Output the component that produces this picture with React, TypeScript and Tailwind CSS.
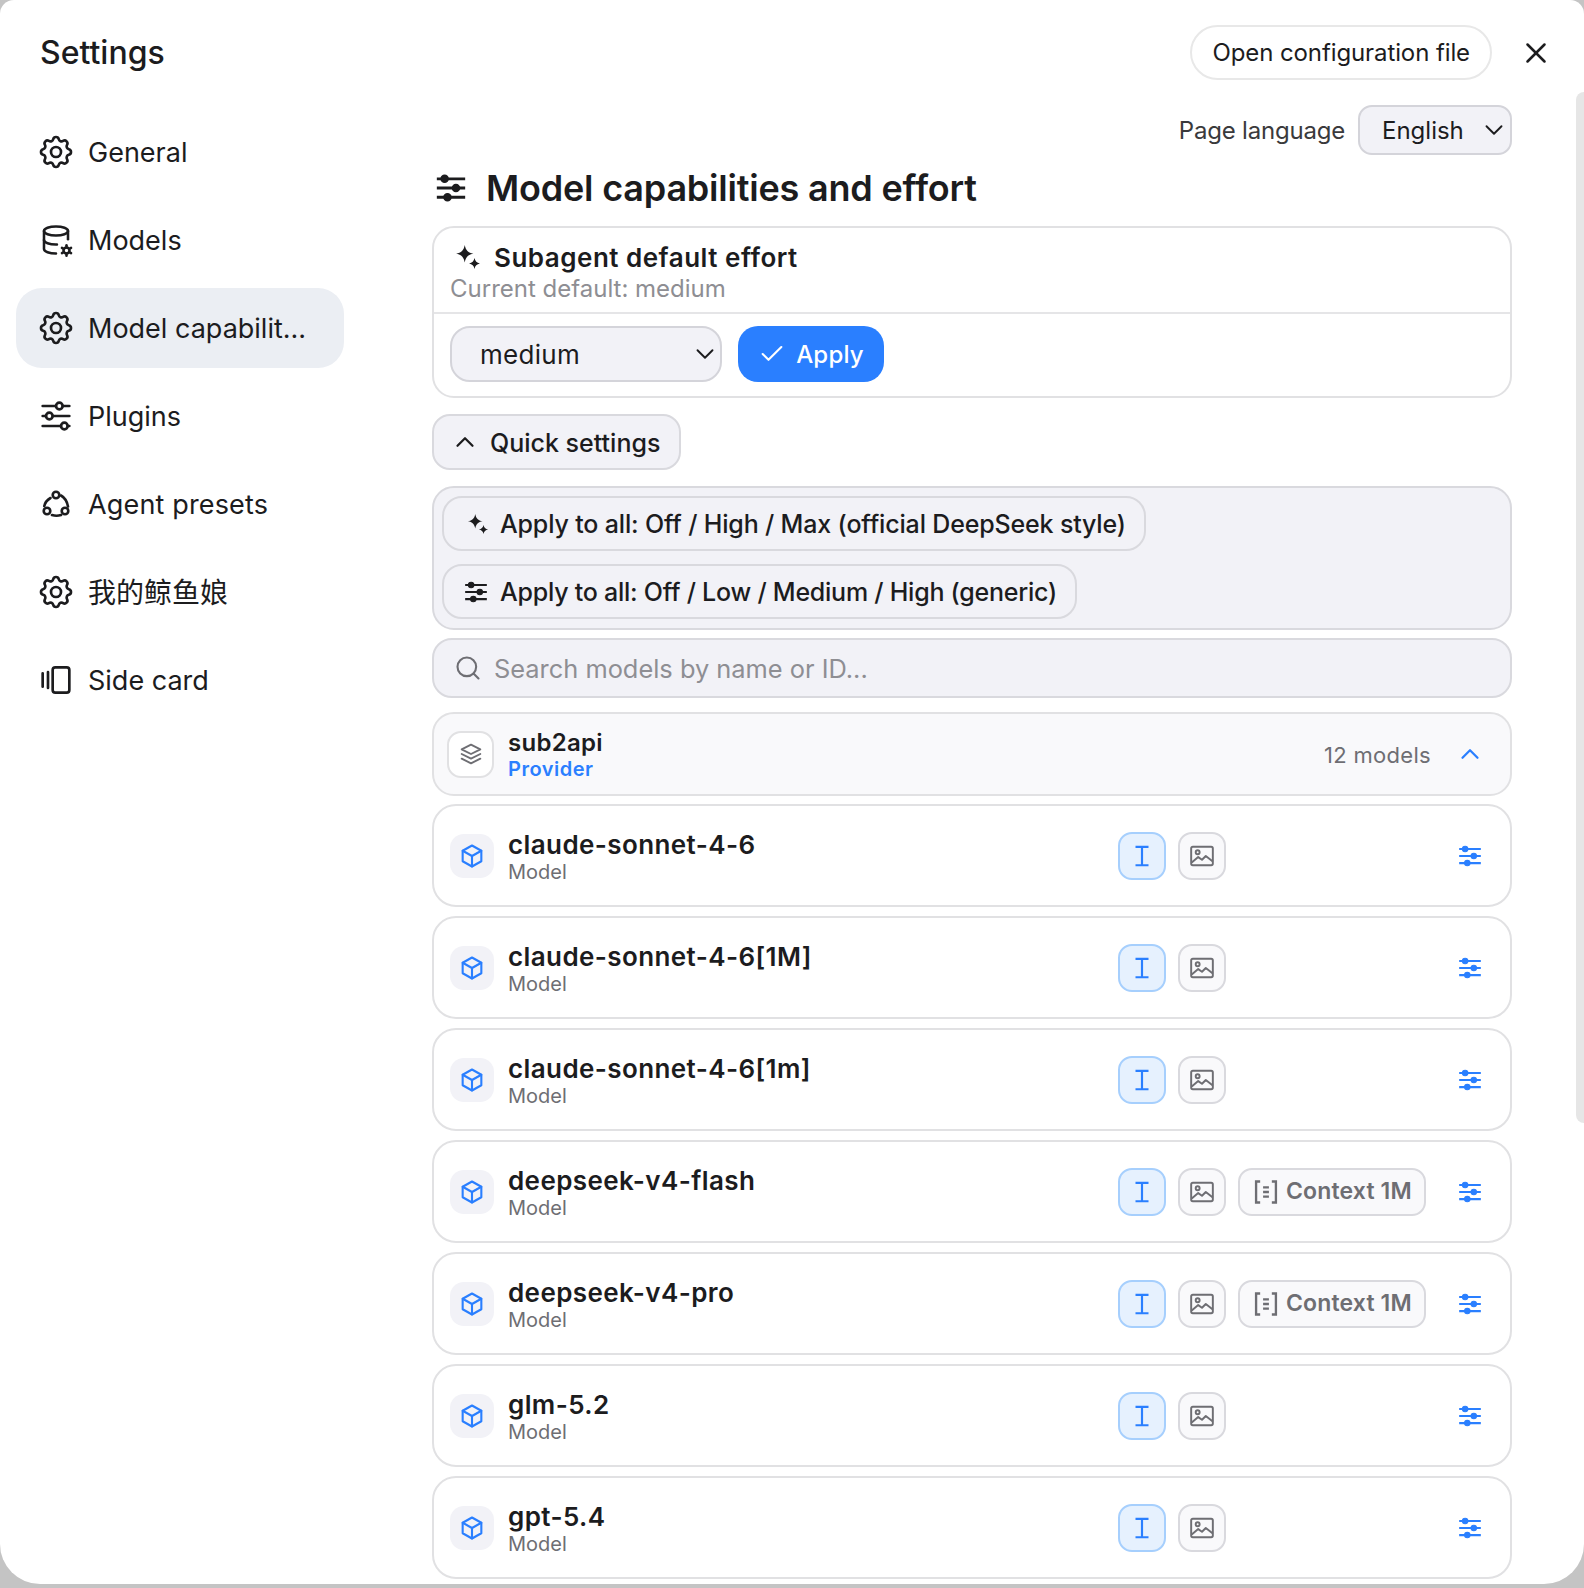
import { LuCheck, LuChevronDown, LuChevronUp, LuSearch, LuX } from 'react-icons/lu';
import { TbAdjustmentsHorizontal, TbBox, TbDatabaseCog, TbSettings, TbStack2 } from 'react-icons/tb';
import type { ReactNode } from 'react';

const font = { fontFamily: 'Inter, "Noto Sans CJK SC", sans-serif' };

function Sparkle({ className }: { className: string }) {
  return (
    <svg viewBox="0 0 24 24" className={className} fill="currentColor">
      <path d="M9 1c.8 4.800 3.200 7.200 8 8-4.800.8-7.200 3.200-8 8-.8-4.800-3.200-7.200-8-8 4.800-.8 7.200-3.200 8-8z" />
      <path d="M18 13c.5 2.800 2.200 4.500 5 5-2.800.5-4.500 2.200-5 5-.5-2.800-2.200-4.500-5-5 2.800-.5 4.500-2.200 5-5z" />
    </svg>
  );
}

function Tune({ className }: { className: string }) {
  return (
    <svg viewBox="0 0 24 24" className={className} fill="currentColor" stroke="currentColor">
      <path d="M2 5.500h20M2 12h20M2 18.500h20" strokeWidth="2" fill="none" />
      <circle cx="7.500" cy="5.500" r="2.500" strokeWidth="1" />
      <circle cx="15.500" cy="12" r="2.500" strokeWidth="1" />
      <circle cx="9.500" cy="18.500" r="2.500" strokeWidth="1" />
    </svg>
  );
}

function SideCardIcon({ className }: { className: string }) {
  return (
    <svg viewBox="0 0 24 24" className={className} fill="none" stroke="currentColor" strokeWidth="2" strokeLinecap="round">
      <path d="M2 7v10M6 6v12" />
      <rect x="9.500" y="2.500" width="12.500" height="19" rx="2" />
    </svg>
  );
}

function RingIcon({ className }: { className: string }) {
  return (
    <svg viewBox="0 0 40 40" className={className} fill="none" stroke="currentColor" strokeWidth="2.600" strokeLinecap="round">
      <circle cx="20" cy="11" r="3.300" />
      <circle cx="11" cy="27" r="3.300" />
      <circle cx="29" cy="27" r="3.300" />
      <path d="M14.500 14C11 16 9 19 8.300 22M25 11.500C28.500 13.500 31 17 32 22.500M16 31c3 1 6 1 9 0" />
    </svg>
  );
}

function TextIcon() {
  return (
    <svg viewBox="0 0 24 24" className="w-[26px] h-[26px]" fill="none" stroke="currentColor" strokeWidth="2">
      <path d="M6 3.500h12M12 3.500v17M6 20.500h12" />
    </svg>
  );
}

function ImageIcon() {
  return (
    <svg viewBox="0 0 24 24" className="w-[26px] h-[26px]" fill="none" stroke="currentColor" strokeWidth="1.800" strokeLinejoin="round">
      <rect x="2" y="3.500" width="20" height="17" rx="1.500" />
      <circle cx="8" cy="8.500" r="1.800" />
      <path d="M2.500 18l6-5 3.500 2.500 3.500-3.500 6.500 5" />
    </svg>
  );
}

function ContextIcon() {
  return (
    <svg viewBox="0 0 24 24" className="w-[28px] h-[28px]" fill="none" stroke="currentColor" strokeWidth="2">
      <path d="M7 3H3.500v18H7M17 3h3.500v18H17M9.500 8h5M9.500 12h5M9.500 16h5" />
    </svg>
  );
}

const gear = <TbSettings className="w-10 h-10" strokeWidth={1.6} />;

const nav = [
  { label: 'General', icon: gear, text: 'text-[27px]' },
  { label: 'Models', icon: <TbDatabaseCog className="w-9 h-9 mx-[2px]" strokeWidth={1.7} />, text: 'text-[27px]' },
  { label: 'Model capabilit...', icon: gear, active: true, text: 'text-[27px]' },
  { label: 'Plugins', icon: <TbAdjustmentsHorizontal className="w-10 h-10" strokeWidth={1.6} />, text: 'text-[27px]' },
  { label: 'Agent presets', icon: <RingIcon className="w-10 h-10" />, text: 'text-[27px] tracking-[0.15px]' },
  { label: '我的鲸鱼娘', icon: gear, text: 'text-[28px]' },
  { label: 'Side card', icon: <SideCardIcon className="w-8 h-8 mx-1" />, text: 'text-[27px]' },
];

const models = [
  { name: 'claude-sonnet-4-6' },
  { name: 'claude-sonnet-4-6[1M]' },
  { name: 'claude-sonnet-4-6[1m]' },
  { name: 'deepseek-v4-flash', context: true },
  { name: 'deepseek-v4-pro', context: true },
  { name: 'glm-5.2' },
  { name: 'gpt-5.4' },
];

function QuickButton({ icon, className, children }: { icon: ReactNode; className: string; children: ReactNode }) {
  return (
    <button className={`h-[55px] w-fit flex items-center gap-[11px] pl-[19px] rounded-[20px] border-2 border-[#d9d9de] bg-[#f2f2f7] text-[25px] font-medium text-[#1c1c1e] ${className}`}>
      {icon}
      <span className="pt-[3px]">{children}</span>
    </button>
  );
}

function ModelRow({ name, context }: { name: string; context?: boolean }) {
  return (
    <div className="h-[103px] shrink-0 flex items-center pl-[16px] pr-[20px] rounded-[24px] border-2 border-[#e1e1e3] bg-white">
      <div className="w-[44px] h-[44px] mr-[14px] flex items-center justify-center rounded-[14px] bg-[#f2f2f7] text-[#2a7fff]">
        <TbBox className="w-[28px] h-[28px]" strokeWidth={1.8} />
      </div>
      <div className="flex-1 min-w-0 pt-[2px]">
        <div className="text-[26px] leading-[30px] font-semibold text-[#1c1c1e] tracking-[0.4px]">{name}</div>
        <div className="text-[20px] leading-[24px] text-[#6e6e73]">Model</div>
      </div>
      <div className="w-[332px] flex items-center gap-3">
        <div className="w-[48px] h-[48px] flex items-center justify-center rounded-[14px] border-2 border-[#a6cffd] bg-[#e6f1fe] text-[#2a7fff]">
          <TextIcon />
        </div>
        <div className="w-[48px] h-[48px] flex items-center justify-center rounded-[14px] border-2 border-[#d9d9de] bg-[#f9f9fb] text-[#6e6e73]">
          <ImageIcon />
        </div>
        {context && (
          <div className="h-[48px] w-[188px] flex items-center gap-[6px] pl-[12px] rounded-[14px] border-2 border-[#d9d9de] bg-[#f9f9fb] text-[#6e6e73] text-[23px] font-semibold tracking-[0.15px]">
            <ContextIcon />
            Context 1M
          </div>
        )}
      </div>
      <div className="w-[40px] flex justify-center text-[#2a7fff]">
        <Tune className="w-[26px] h-[26px]" />
      </div>
    </div>
  );
}

export default function App() {
  return (
    <div className="w-[1584px] h-[1588px] bg-[#c4c4c4] overflow-hidden" style={font}>
      <div className="relative h-[1584px] flex flex-col rounded-t-[14px] rounded-b-[40px] bg-white overflow-hidden text-[#1c1c1e]">
        <header className="shrink-0 flex items-start justify-between pl-[40px] pr-[31px] pt-[25px] h-[105px]">
          <h1 className="text-[32px] leading-[56px] font-medium">Settings</h1>
          <div className="flex items-center gap-[27px] h-[55px]">
            <button className="h-[55px] px-5 rounded-full border-2 border-[#e8e8e8] text-[24px] tracking-[-0.1px]">
              Open configuration file
            </button>
            <LuX className="w-[34px] h-[34px]" strokeWidth={1.8} />
          </div>
        </header>

        <div className="flex-1 min-h-0 flex">
          <aside className="w-[432px] shrink-0 pl-4 pt-[7px] flex flex-col gap-2">
            {nav.map(item => (
              <div key={item.label}
                className={`w-[328px] h-[80px] flex items-center gap-3 pl-5 rounded-[26px] ${item.text} ${item.active ? 'bg-[#ebeef3]' : ''}`}>
                {item.icon}
                <span className="pt-[2px]">{item.label}</span>
              </div>
            ))}
          </aside>

          <main className="w-[1080px] shrink-0 flex flex-col overflow-hidden">
            <div className="h-[50px] shrink-0 flex items-center justify-end gap-[13px]">
              <span className="pt-[2px] text-[24px] text-[#3a3a3c] tracking-[-0.2px]">Page language</span>
              <div className="w-[154px] h-[50px] flex items-center justify-between pl-[22px] pr-[1px] rounded-[14px] border-2 border-[#d4d4da] bg-[#f2f2f7] text-[24px]">
                <span className="pt-[2px]">English</span>
                <LuChevronDown className="w-[30px] h-[30px]" strokeWidth={1.5} />
              </div>
            </div>

            <div className="h-[71px] shrink-0 flex items-center gap-[18px] pl-[2px] pb-[6px]">
              <Tune className="w-[34px] h-[34px]" />
              <h2 className="text-[36px] font-semibold tracking-[-0.2px]">Model capabilities and effort</h2>
            </div>

            <section className="shrink-0 h-[172px] rounded-[22px] border-2 border-[#e1e1e3] bg-white">
              <div className="h-[86px] border-b-2 border-[#e5e5e7] pl-[16px] pt-[12px]">
                <div className="flex items-center gap-[13px] pl-[5px] h-[34px]">
                  <Sparkle className="w-[26px] h-[26px]" />
                  <span className="text-[26px] font-semibold tracking-[0.5px]">Subagent default effort</span>
                </div>
                <div className="text-[24px] leading-[28px] text-[#8e8e93] mt-[1px]">Current default: medium</div>
              </div>
              <div className="flex items-center gap-4 pl-[16px] pt-[12px]">
                <div className="w-[272px] h-[56px] flex items-center justify-between pl-[28px] rounded-[20px] border-2 border-[#d4d4da] bg-[#f2f2f7] text-[26px] tracking-[0.3px]">
                  medium
                  <LuChevronDown className="w-[30px] h-[30px]" strokeWidth={1.5} />
                </div>
                <button className="w-[146px] h-[56px] flex items-center justify-center gap-[10px] rounded-[20px] bg-[#2a7fff] text-white text-[24px] font-medium tracking-[0.2px]">
                  <LuCheck className="w-[28px] h-[28px]" strokeWidth={1.8} />
                  <span className="pt-[2px]">Apply</span>
                </button>
              </div>
            </section>

            <button className="mt-[16px] shrink-0 w-[249px] h-[56px] flex items-center gap-[10px] pl-[16px] rounded-[18px] border-2 border-[#d9d9de] bg-[#f2f2f7] text-[25px] font-medium">
              <LuChevronUp className="w-[30px] h-[30px]" strokeWidth={1.8} />
              <span className="pt-[3px]">Quick settings</span>
            </button>

            <div className="mt-[16px] shrink-0 h-[144px] flex flex-col gap-[13px] pl-[8px] pt-[8px] rounded-[22px] border-2 border-[#d9d9de] bg-[#f2f2f7]">
              <QuickButton icon={<Sparkle className="w-[22px] h-[22px] ml-1" />} className="pr-[18px] tracking-[-0.16px]">
                Apply to all: Off / High / Max (official DeepSeek style)
              </QuickButton>
              <QuickButton icon={<Tune className="w-[26px] h-[26px]" />} className="pr-[18px] tracking-[-0.24px]">
                Apply to all: Off / Low / Medium / High (generic)
              </QuickButton>
            </div>

            <div className="mt-[8px] shrink-0 h-[60px] flex items-center gap-[12px] pl-[20px] rounded-[20px] border-2 border-[#d9d9de] bg-[#f2f2f7]">
              <LuSearch className="w-[28px] h-[28px] text-[#6e6e73]" strokeWidth={1.8} />
              <input placeholder="Search models by name or ID..."
                className="flex-1 pt-[3px] bg-transparent outline-none text-[25.4px] placeholder:text-[#8e8e93]" />
            </div>

            <div className="mt-[14px] shrink-0 h-[84px] flex items-center pl-[13px] pr-[20px] rounded-[22px] border-2 border-[#e1e1e3] bg-[#f9f9fb]">
              <div className="w-[47px] h-[47px] mr-[14px] flex items-center justify-center rounded-[14px] border-2 border-[#e1e1e3] bg-white text-[#6e6e73]">
                <TbStack2 className="w-[28px] h-[28px]" strokeWidth={1.6} />
              </div>
              <div className="flex-1 pt-[2px]">
                <div className="text-[24px] leading-[28px] font-semibold tracking-[0.3px]">sub2api</div>
                <div className="text-[20px] leading-[24px] font-semibold text-[#2a7fff] tracking-[0.5px]">Provider</div>
              </div>
              <span className="pt-[2px] text-[22px] text-[#6e6e73] tracking-[0.3px] mr-[19px]">12 models</span>
              <div className="w-[40px] flex justify-center text-[#2a7fff]">
                <LuChevronUp className="w-[30px] h-[30px]" strokeWidth={1.8} />
              </div>
            </div>

            <div className="mt-[8px] flex flex-col gap-[9px]">
              {models.map(m => (
                <ModelRow key={m.name} name={m.name} context={m.context} />
              ))}
            </div>
          </main>
        </div>

        {/* scrollbar */}
        <div className="absolute right-0 top-[92px] w-2 h-[1031px] rounded-l-[8px] bg-[#e6e6e6]" />
      </div>
    </div>
  );
}
